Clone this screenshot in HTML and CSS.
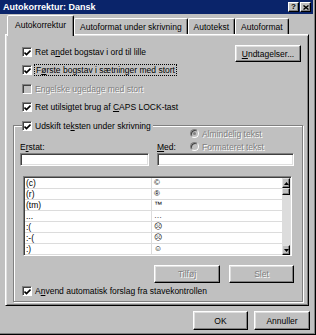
FILE: index.html
```html
<!DOCTYPE html>
<html lang="da">
<head>
    <meta charset="UTF-8">
    <title>Autokorrektur: Dansk</title>
    <link rel="stylesheet" href="styles.css">
</head>
<body>
    <div class="dialog">
        <div class="titlebar">
            <span class="title">Autokorrektur: Dansk</span>
            <div class="title-btns">
                <span class="tbtn">?</span>
                <span class="tbtn">
                    <svg width="6" height="5" viewBox="0 0 6 5"><path d="M0.5 0.5 L5.5 4.5 M5.5 0.5 L0.5 4.5" stroke="#000" stroke-width="1.4"/></svg>
                </span>
            </div>
        </div>

        <div class="tabs">
            <div class="tab active">Autokorrektur</div>
            <div class="tab">Autoformat under skrivning</div>
            <div class="tab">Autotekst</div>
            <div class="tab">Autoformat</div>
        </div>

        <div class="panel">
            <div class="top-row">
                <div class="checks">
                    <label class="check">
                        <span class="box"><svg width="7" height="7" viewBox="0 0 7 7"><path d="M0.5 3.5 L2.5 5.5 L6.5 1.5" fill="none" stroke="#000" stroke-width="1.6"/></svg></span>
                        <span>Ret a<u>n</u>det bogstav i ord til lille</span>
                    </label>
                    <label class="check">
                        <span class="box"><svg width="7" height="7" viewBox="0 0 7 7"><path d="M0.5 3.5 L2.5 5.5 L6.5 1.5" fill="none" stroke="#000" stroke-width="1.6"/></svg></span>
                        <span class="focus">F<u>ø</u>rste bogstav i sætninger med stort</span>
                    </label>
                    <label class="check disabled">
                        <span class="box"></span>
                        <span>Engelske ugedage med stort</span>
                    </label>
                    <label class="check">
                        <span class="box"><svg width="7" height="7" viewBox="0 0 7 7"><path d="M0.5 3.5 L2.5 5.5 L6.5 1.5" fill="none" stroke="#000" stroke-width="1.6"/></svg></span>
                        <span>Ret utilsigtet brug af <u>C</u>APS LOCK-tast</span>
                    </label>
                </div>
                <button class="btn btn-exceptions"><u>U</u>ndtagelser...</button>
            </div>

            <div class="group">
                <label class="check group-legend">
                    <span class="box"><svg width="7" height="7" viewBox="0 0 7 7"><path d="M0.5 3.5 L2.5 5.5 L6.5 1.5" fill="none" stroke="#000" stroke-width="1.6"/></svg></span>
                    <span>Udskift te<u>k</u>sten under skrivning</span>
                </label>

                <div class="fields">
                    <div></div>
                    <label class="radio disabled first-radio"><span class="dot on"></span>Almindelig tekst</label>
                    <label class="field-label">E<u>r</u>stat:</label>
                    <div class="med-row">
                        <label class="field-label med-label"><u>M</u>ed:</label>
                        <label class="radio disabled"><span class="dot"></span>Formateret tekst</label>
                    </div>
                    <div class="input"></div>
                    <div class="input"></div>
                </div>

                <div class="list">
                    <div class="list-rows" id="listRows"></div>
                    <div class="scrollbar">
                        <div class="sb-btn"><svg width="5" height="3" viewBox="0 0 5 3"><path d="M0 3 L2.5 0 L5 3Z" fill="#000"/></svg></div>
                        <div class="sb-thumb"></div>
                        <div class="sb-track"></div>
                        <div class="sb-btn"><svg width="5" height="3" viewBox="0 0 5 3"><path d="M0 0 L2.5 3 L5 0Z" fill="#000"/></svg></div>
                    </div>
                </div>

                <div class="list-buttons">
                    <button class="btn btn-add disabled">Tilføj</button>
                    <button class="btn btn-del disabled">Slet</button>
                </div>

                <label class="check spell-check">
                    <span class="box"><svg width="7" height="7" viewBox="0 0 7 7"><path d="M0.5 3.5 L2.5 5.5 L6.5 1.5" fill="none" stroke="#000" stroke-width="1.6"/></svg></span>
                    <span>A<u>n</u>vend automatisk forslag fra stavekontrollen</span>
                </label>
            </div>
        </div>

        <div class="footer">
            <button class="btn btn-ok">OK</button>
            <button class="btn btn-cancel">Annuller</button>
        </div>
    </div>

    <script>
        const entries = [
            ['(c)', '©'],
            ['(r)', '®'],
            ['(tm)', '™'],
            ['...', '…'],
            [':(', '☹'],
            [':-(', '☹'],
            [':)', '☺']
        ];

        const rows = document.getElementById('listRows');
        entries.forEach(([from, to]) => {
            const row = document.createElement('div');
            row.className = 'list-row';
            row.innerHTML = `<span class="cell-from">${from}</span><span class="cell-to">${to}</span>`;
            rows.appendChild(row);
        });
    </script>
</body>
</html>
```

FILE: styles.css
```css
* {
    box-sizing: border-box;
}

body {
    margin: 0;
    background: #c0c0c0;
    font-family: "Liberation Sans", Arial, sans-serif;
    font-size: 8.5px;
    color: #000;
}

u {
    text-decoration-thickness: 1px;
    text-underline-offset: 1px;
}

.dialog {
    width: 316px;
    height: 335px;
    background: #c0c0c0;
    border-right: 1px solid #000;
    border-bottom: 1px solid #000;
    box-shadow: inset -1px -1px #808080;
    padding: 0 2px 2px 0;
    display: flex;
    flex-direction: column;
}

/* Title bar */
.titlebar {
    height: 14px;
    flex-shrink: 0;
    background: #0a246a;
    color: #fff;
    display: flex;
    align-items: center;
    justify-content: space-between;
    padding: 0 2px 0 3px;
}

.title {
    font-weight: bold;
    font-size: 9px;
}

.title-btns {
    display: flex;
    gap: 1px;
}

.tbtn {
    width: 11px;
    height: 10px;
    background: #c0c0c0;
    border: 1px solid;
    border-color: #fff #000 #000 #fff;
    box-shadow: inset -1px -1px #808080;
    display: flex;
    align-items: center;
    justify-content: center;
    color: #000;
    font-weight: bold;
    font-size: 8px;
    line-height: 1;
}

/* Tabs */
.tabs {
    height: 20px;
    flex-shrink: 0;
    display: flex;
    align-items: flex-end;
    padding-left: 7px;
}

.tab {
    height: 16px;
    padding: 0 5px;
    border: 1px solid;
    border-bottom: none;
    border-color: #fff #000 transparent #fff;
    box-shadow: inset -1px 0 #808080;
    border-radius: 2px 2px 0 0;
    display: flex;
    align-items: center;
    white-space: nowrap;
}

.tab.active {
    height: 21px;
    margin-bottom: -2px;
    padding: 0 7px 2px;
    position: relative;
    z-index: 1;
    background: #c0c0c0;
}

/* Panel */
.panel {
    flex: 1;
    margin: 0 4px 0 5px;
    border: 1px solid;
    border-color: #fff #000 #000 #fff;
    box-shadow: inset 1px 1px #dfdfdf, inset -1px -1px #808080;
    padding: 10px 5px 3px 7px;
    display: flex;
    flex-direction: column;
}

.top-row {
    display: flex;
    justify-content: space-between;
    align-items: flex-start;
}

.checks {
    display: flex;
    flex-direction: column;
    gap: 5.5px;
    padding-left: 9px;
}

.check {
    height: 13px;
    display: flex;
    align-items: center;
    gap: 3px;
    white-space: nowrap;
}

.box {
    width: 10px;
    height: 10px;
    flex-shrink: 0;
    background: #fff;
    border: 1px solid;
    border-color: #808080 #fff #fff #808080;
    box-shadow: inset 1px 1px #404040;
    display: flex;
    align-items: center;
    justify-content: center;
    padding: 1px 0 0 1px;
}

.focus {
    outline: 1px dotted #000;
    outline-offset: 0;
    padding: 0 1px;
}

.disabled {
    color: #808080;
    text-shadow: 1px 1px 0 #fff;
}

.check.disabled .box {
    background: #c0c0c0;
}

/* Buttons */
.btn {
    font: inherit;
    color: #000;
    background: #c0c0c0;
    border: 1px solid;
    border-color: #fff #000 #000 #fff;
    box-shadow: inset -1px -1px #808080, inset 1px 1px #dfdfdf;
    padding: 0;
    display: flex;
    align-items: center;
    justify-content: center;
}

.btn.disabled {
    color: #808080;
}

.btn-exceptions {
    width: 66px;
    height: 17px;
    margin-right: 2px;
}

/* Group box */
.group {
    position: relative;
    flex: 1;
    margin-top: 11.5px;
    border: 1px solid #808080;
    box-shadow: inset 1px 1px #fff, 1px 1px #fff;
    padding: 1px 7px 0 6px;
    display: flex;
    flex-direction: column;
}

.group-legend {
    position: absolute;
    top: -7px;
    left: 8px;
    background: #c0c0c0;
    padding-right: 2px;
}

.fields {
    display: grid;
    grid-template-columns: 129px 137px;
    grid-template-rows: 13px 13px 13px;
    column-gap: 8px;
}

.radio {
    display: flex;
    align-items: center;
    gap: 3px;
    white-space: nowrap;
}

.first-radio {
    padding-left: 33px;
}

.dot {
    width: 9px;
    height: 9px;
    flex-shrink: 0;
    border-radius: 50%;
    background: #c0c0c0;
    border: 1px solid;
    border-color: #808080 #fff #fff #808080;
    box-shadow: inset 1px 1px #404040;
    display: flex;
    align-items: center;
    justify-content: center;
}

.dot.on::after {
    content: '';
    width: 3px;
    height: 3px;
    border-radius: 50%;
    background: #808080;
}

.field-label {
    display: flex;
    align-items: center;
}

.med-row {
    display: flex;
    align-items: center;
}

.med-label {
    width: 33px;
}

.input {
    height: 13px;
    background: #fff;
    border: 1px solid;
    border-color: #808080 #fff #fff #808080;
    box-shadow: inset 1px 1px #404040, inset -1px -1px #dfdfdf;
}

/* Replacement list */
.list {
    height: 80px;
    margin: 10px 3px 0 3px;
    background: #fff;
    border: 1px solid;
    border-color: #808080 #fff #fff #808080;
    box-shadow: inset 1px 1px #404040, inset -1px -1px #dfdfdf;
    padding: 1px 1px 0 1px;
    display: flex;
    overflow: hidden;
}

.list-rows {
    flex: 1;
    overflow: hidden;
}

.list-row {
    height: 11px;
    display: flex;
    border-bottom: 1px solid #dcdcdc;
    line-height: 10px;
}

.cell-from {
    width: 127px;
    padding-left: 1px;
    border-right: 1px solid #dcdcdc;
}

.cell-to {
    padding-left: 2px;
    font-size: 8px;
}

.scrollbar {
    width: 8px;
    display: flex;
    flex-direction: column;
    background: #dcdcdc;
}

.sb-btn,
.sb-thumb {
    background: #c0c0c0;
    border: 1px solid;
    border-color: #dfdfdf #000 #000 #dfdfdf;
    box-shadow: inset -1px -1px #808080;
}

.sb-btn {
    height: 10px;
    display: flex;
    align-items: center;
    justify-content: center;
}

.sb-thumb {
    height: 7px;
}

.sb-track {
    flex: 1;
}

.list-buttons {
    display: flex;
    justify-content: flex-end;
    gap: 9px;
    margin-top: 9px;
    padding-right: 1px;
}

.btn-add {
    width: 66px;
    height: 18px;
}

.btn-del {
    width: 65px;
    height: 18px;
}

.spell-check {
    margin: 1.5px 0 0 2px;
}

/* Footer buttons */
.footer {
    flex-shrink: 0;
    display: flex;
    justify-content: flex-end;
    gap: 6px;
    padding: 5px 3px 2px 0;
}

.btn-ok {
    width: 55px;
    height: 19px;
}

.btn-cancel {
    width: 56px;
    height: 19px;
}
```
